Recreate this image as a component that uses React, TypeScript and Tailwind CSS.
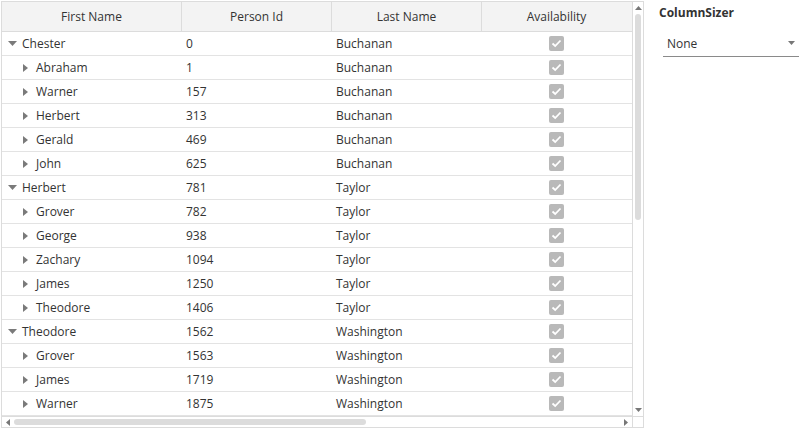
import React from "react";

type Row = { name: string; id: number; last: string; level: 0 | 1 };

const rows: Row[] = [
  { name: "Chester", id: 0, last: "Buchanan", level: 0 },
  { name: "Abraham", id: 1, last: "Buchanan", level: 1 },
  { name: "Warner", id: 157, last: "Buchanan", level: 1 },
  { name: "Herbert", id: 313, last: "Buchanan", level: 1 },
  { name: "Gerald", id: 469, last: "Buchanan", level: 1 },
  { name: "John", id: 625, last: "Buchanan", level: 1 },
  { name: "Herbert", id: 781, last: "Taylor", level: 0 },
  { name: "Grover", id: 782, last: "Taylor", level: 1 },
  { name: "George", id: 938, last: "Taylor", level: 1 },
  { name: "Zachary", id: 1094, last: "Taylor", level: 1 },
  { name: "James", id: 1250, last: "Taylor", level: 1 },
  { name: "Theodore", id: 1406, last: "Taylor", level: 1 },
  { name: "Theodore", id: 1562, last: "Washington", level: 0 },
  { name: "Grover", id: 1563, last: "Washington", level: 1 },
  { name: "James", id: 1719, last: "Washington", level: 1 },
  { name: "Warner", id: 1875, last: "Washington", level: 1 },
];

const font = { fontFamily: '"Segoe UI", "Open Sans", "Noto Sans", sans-serif' };

function Down() {
  return (
    <svg width="9" height="5" viewBox="0 0 9 5" className="block">
      <path d="M0 0 L9 0 L4.5 5 Z" fill="#7a7a7a" />
    </svg>
  );
}
function Right() {
  return (
    <svg width="5" height="8" viewBox="0 0 5 8" className="block">
      <path d="M0 0 L5 4 L0 8 Z" fill="#7a7a7a" />
    </svg>
  );
}

function Check() {
  return (
    <div className="w-[15px] h-[15px] rounded-[2px] bg-[#b9b9b9] flex items-center justify-center">
      <svg width="11" height="9" viewBox="0 0 11 9">
        <path d="M1.5 4.5 L4.2 7 L9.5 1.5" fill="none" stroke="#fff" strokeWidth="1.8" />
      </svg>
    </div>
  );
}

export default function App() {
  return (
    <div className="w-[804px] h-[429px] bg-white text-[12px] text-[#333] flex" style={font}>
      <div className="ml-[1px] mt-[1px] w-[643px] h-[427px] border border-[#dcdcdc] flex flex-col">
        <div className="flex flex-1 min-h-0">
          <div className="w-[630px] flex flex-col">
            <div className="flex h-[30px] bg-[#f3f3f3] border-b border-[#dcdcdc]">
              <div className="w-[180px] border-r border-[#dcdcdc] flex items-center justify-center">First Name</div>
              <div className="w-[150px] border-r border-[#dcdcdc] flex items-center justify-center">Person Id</div>
              <div className="w-[150px] border-r border-[#dcdcdc] flex items-center justify-center">Last Name</div>
              <div className="w-[149px] flex items-center justify-center">Availability</div>
            </div>
            {rows.map((r, i) => (
              <div key={i} className="flex h-[24px] border-b border-[#e3e3e3]">
                <div className="w-[180px] flex items-center">
                  {r.level === 0 ? (
                    <>
                      <div className="ml-[6px] w-[9px]"><Down /></div>
                      <span className="ml-[5px]">{r.name}</span>
                    </>
                  ) : (
                    <>
                      <div className="ml-[21px] w-[5px]"><Right /></div>
                      <span className="ml-[8px]">{r.name}</span>
                    </>
                  )}
                </div>
                <div className="w-[150px] flex items-center pl-[4px]">{r.id}</div>
                <div className="w-[150px] flex items-center pl-[4px]">{r.last}</div>
                <div className="w-[149px] flex items-center justify-center">
                  <Check />
                </div>
              </div>
            ))}
          </div>
          <div className="w-[11px] border-l border-[#dcdcdc] flex flex-col items-center">
            <div className="h-[12px] flex items-center justify-center">
              <svg width="7" height="4" viewBox="0 0 7 4"><path d="M0 4 L7 4 L3.5 0 Z" fill="#777" /></svg>
            </div>
            <div className="w-[6px] h-[206px] rounded-[3px] bg-[#dcdcdc]" />
            <div className="flex-1" />
            <div className="h-[12px] flex items-center justify-center">
              <svg width="7" height="4" viewBox="0 0 7 4"><path d="M0 0 L7 0 L3.5 4 Z" fill="#777" /></svg>
            </div>
          </div>
        </div>
        <div className="h-[11px] border-t border-[#dcdcdc] flex">
          <div className="w-[630px] flex items-center">
            <div className="w-[12px] flex items-center justify-center">
              <svg width="4" height="7" viewBox="0 0 4 7"><path d="M4 0 L4 7 L0 3.5 Z" fill="#777" /></svg>
            </div>
            <div className="w-[352px] h-[6px] rounded-[3px] bg-[#dcdcdc]" />
            <div className="flex-1" />
            <div className="w-[12px] flex items-center justify-center">
              <svg width="4" height="7" viewBox="0 0 4 7"><path d="M0 0 L0 7 L4 3.5 Z" fill="#777" /></svg>
            </div>
          </div>
          <div className="w-[11px] border-l border-[#dcdcdc]" />
        </div>
      </div>
      <div className="ml-[15px] w-[140px] flex flex-col">
        <div className="mt-[5px] font-bold text-[12px] text-[#333] leading-[16px]">ColumnSizer</div>
        <div className="mt-[10px] ml-[4px] w-[136px] h-[26px] border-b border-[#8a8a8a] flex items-center justify-between">
          <span className="ml-[4px] text-[12px]">None</span>
          <svg width="7" height="4" viewBox="0 0 7 4" className="mr-[4px] mb-[2px]"><path d="M0 0 L7 0 L3.5 4 Z" fill="#777" /></svg>
        </div>
      </div>
    </div>
  );
}
